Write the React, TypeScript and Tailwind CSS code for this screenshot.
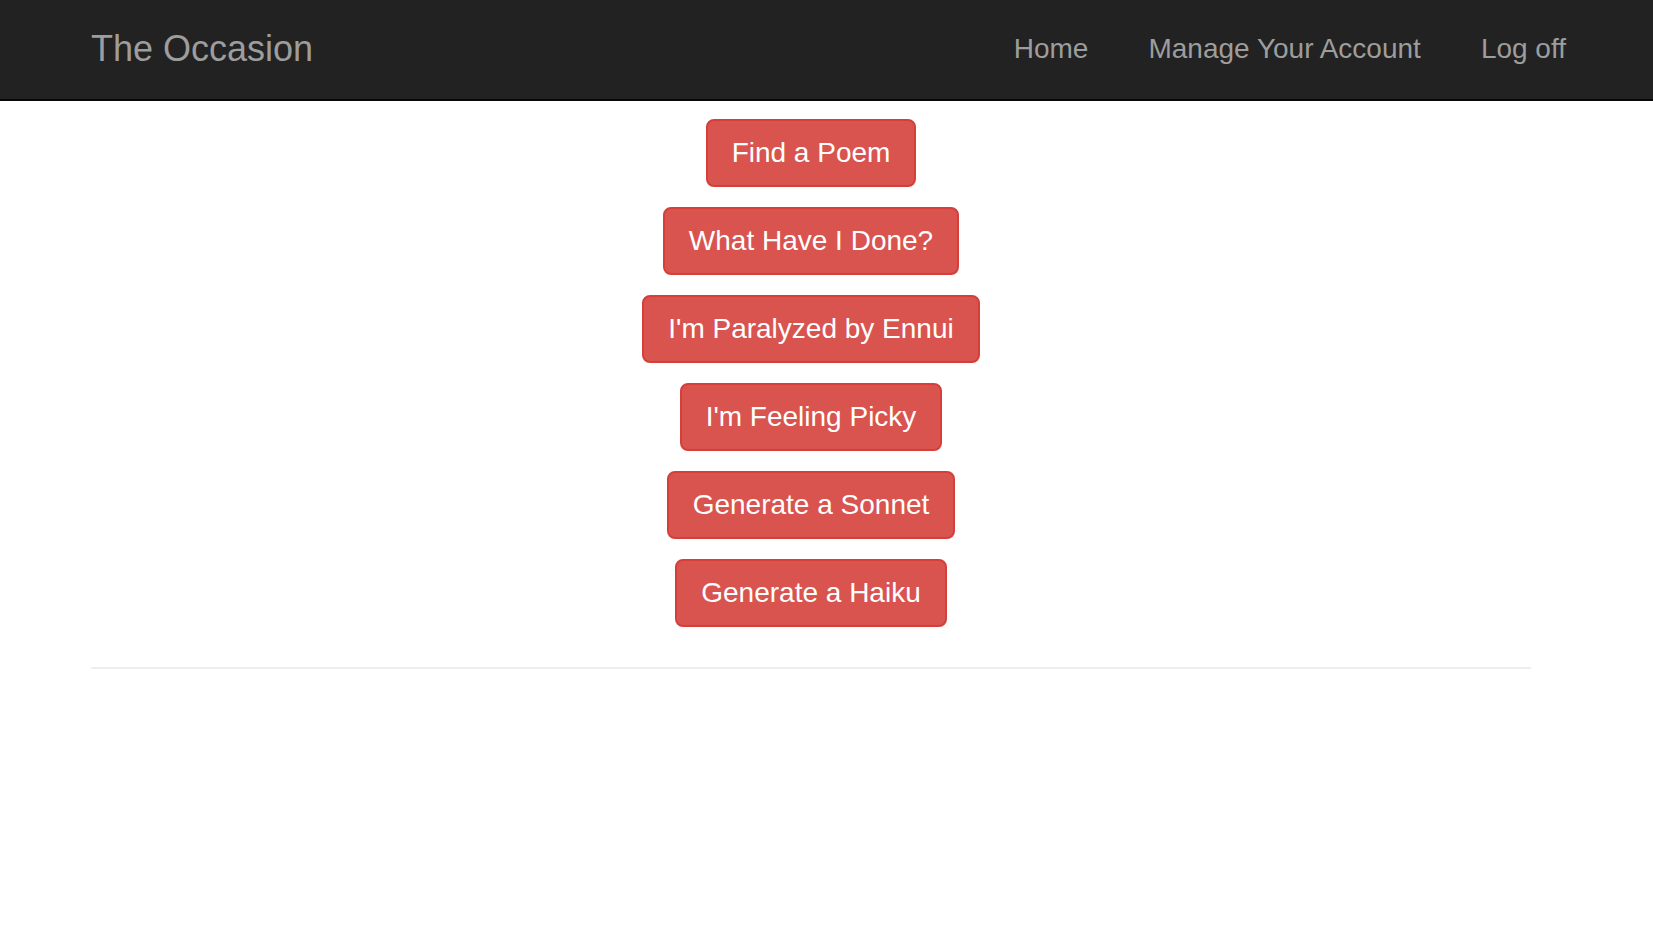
import React from "react";

const buttons = [
  "Find a Poem",
  "What Have I Done?",
  "I'm Paralyzed by Ennui",
  "I'm Feeling Picky",
  "Generate a Sonnet",
  "Generate a Haiku",
];

export default function App() {
  return (
    <div className="min-h-[952px] bg-white font-['Liberation_Sans',Arial,sans-serif]">
      <nav className="flex h-[101px] items-center justify-between border-b-2 border-[#080808] bg-[#222222] pb-[2px] pl-[61px] pr-[57px]">
        <a className="px-[30px] text-[36px] leading-[40px] text-[#9d9d9d]">The Occasion</a>
        <ul className="flex">
          {["Home", "Manage Your Account", "Log off"].map((t) => (
            <li key={t}>
              <a className="block px-[30px] text-[28px] leading-[40px] text-[#9d9d9d]">{t}</a>
            </li>
          ))}
        </ul>
      </nav>
      <main className="ml-[91px] w-[1440px] pt-[18px]">
        {buttons.map((b) => (
          <p key={b} className="mb-[20px] flex justify-center">
            <button className="rounded-[8px] border-2 border-[#d43f3a] bg-[#d9534f] px-[24px] py-[12px] text-[28px] leading-[40px] text-white">
              {b}
            </button>
          </p>
        ))}
        <hr className="mt-[40px] border-t-2 border-[#eeeeee]" />
      </main>
    </div>
  );
}
